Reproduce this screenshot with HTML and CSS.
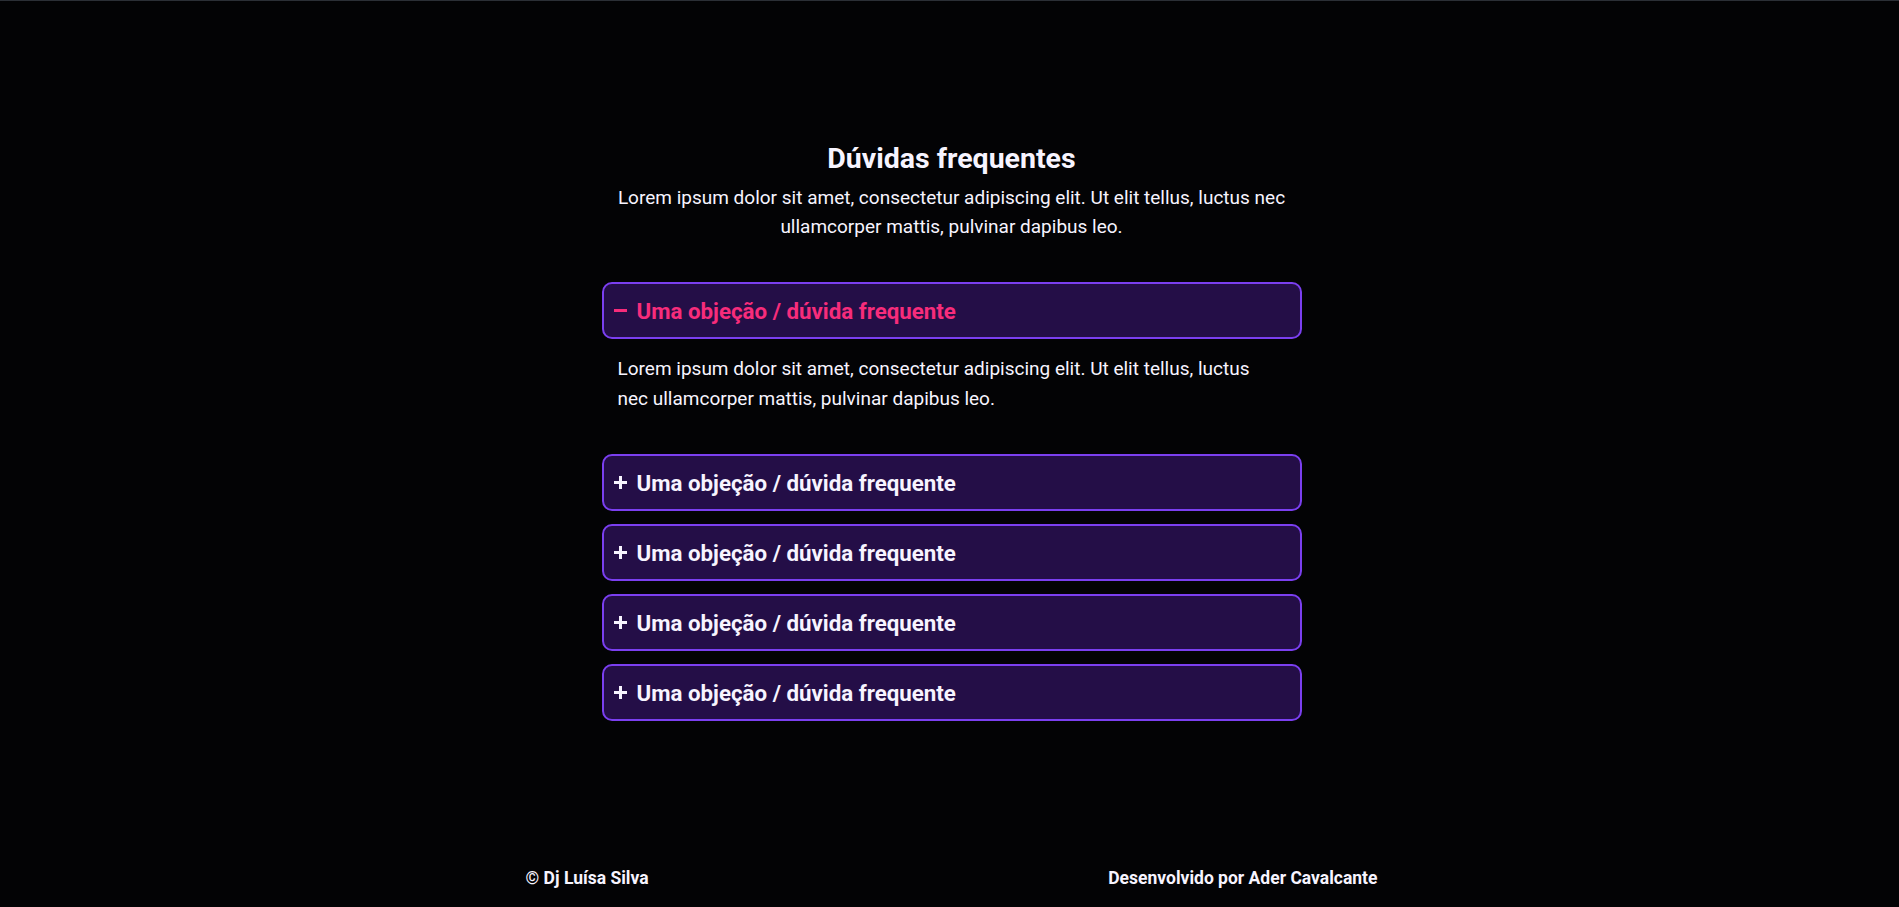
FILE: index.html
```html
<!DOCTYPE html>
<html lang="pt-BR">
<head>
<meta charset="utf-8">
<title>Dúvidas frequentes</title>
<link rel="stylesheet" href="styles.css">
</head>
<body>
<div class="page">
  <main class="faq">
    <h2 class="faq-title">Dúvidas frequentes</h2>
    <p class="faq-lead">Lorem ipsum dolor sit amet, consectetur adipiscing elit. Ut elit tellus, luctus nec ullamcorper mattis, pulvinar dapibus leo.</p>
    <div class="accordion">
      <div class="item open">
        <div class="item-head">
          <svg class="icon" viewBox="0 0 13 13" width="13" height="13"><path d="M0 6.5H13" /></svg>
          <span class="item-title">Uma objeção / dúvida frequente</span>
        </div>
        <div class="item-body">Lorem ipsum dolor sit amet, consectetur adipiscing elit. Ut elit tellus, luctus nec ullamcorper mattis, pulvinar dapibus leo.</div>
      </div>
      <div class="item">
        <div class="item-head">
          <svg class="icon" viewBox="0 0 13 13" width="13" height="13"><path d="M0 6.5H13M6.5 0V13" /></svg>
          <span class="item-title">Uma objeção / dúvida frequente</span>
        </div>
      </div>
      <div class="item">
        <div class="item-head">
          <svg class="icon" viewBox="0 0 13 13" width="13" height="13"><path d="M0 6.5H13M6.5 0V13" /></svg>
          <span class="item-title">Uma objeção / dúvida frequente</span>
        </div>
      </div>
      <div class="item">
        <div class="item-head">
          <svg class="icon" viewBox="0 0 13 13" width="13" height="13"><path d="M0 6.5H13M6.5 0V13" /></svg>
          <span class="item-title">Uma objeção / dúvida frequente</span>
        </div>
      </div>
      <div class="item">
        <div class="item-head">
          <svg class="icon" viewBox="0 0 13 13" width="13" height="13"><path d="M0 6.5H13M6.5 0V13" /></svg>
          <span class="item-title">Uma objeção / dúvida frequente</span>
        </div>
      </div>
    </div>
  </main>
  <footer class="footer">
    <span>© Dj Luísa Silva</span>
    <span>Desenvolvido por Ader Cavalcante</span>
  </footer>
</div>
</body>
</html>
```
FILE: styles.css
```css
html, body {
  margin: 0;
  padding: 0;
  background: #030305;
}
body {
  border-top: 1px solid #2b2f36;
  font-family: Roboto, "Liberation Sans", sans-serif;
  color: #f7f4ff;
  height: 906px;
  overflow: hidden;
}
.page {
  display: flex;
  flex-direction: column;
  align-items: center;
  padding-left: 4px;
}
.faq {
  width: 700px;
  padding-top: 140px;
  display: flex;
  flex-direction: column;
  align-items: center;
}
.faq-title {
  margin: 0;
  font-size: 28.5px;
  font-weight: 700;
  line-height: 36px;
}
.faq-lead {
  margin: 6px 0 0;
  font-size: 19px;
  line-height: 29px;
  text-align: center;
}
.accordion {
  width: 700px;
  margin-top: 41px;
  display: flex;
  flex-direction: column;
  gap: 13px;
}
.item-head {
  box-sizing: border-box;
  height: 57px;
  display: flex;
  align-items: center;
  gap: 10px;
  padding: 0 10px;
  background: #240e47;
  border: 2px solid #7b3ff0;
  border-radius: 10px;
  font-size: 22.3px;
  font-weight: 700;
}
.icon {
  flex: none;
  fill: none;
  stroke: currentColor;
  stroke-width: 3;
}
.open .item-head {
  color: #f72c7b;
}
.item-body {
  padding: 15px 30px 27px 16px;
  font-size: 19px;
  line-height: 30px;
}
.footer {
  width: 852px;
  margin-top: 147px;
  display: flex;
  justify-content: space-between;
  font-size: 17.5px;
  font-weight: 700;
}
```
